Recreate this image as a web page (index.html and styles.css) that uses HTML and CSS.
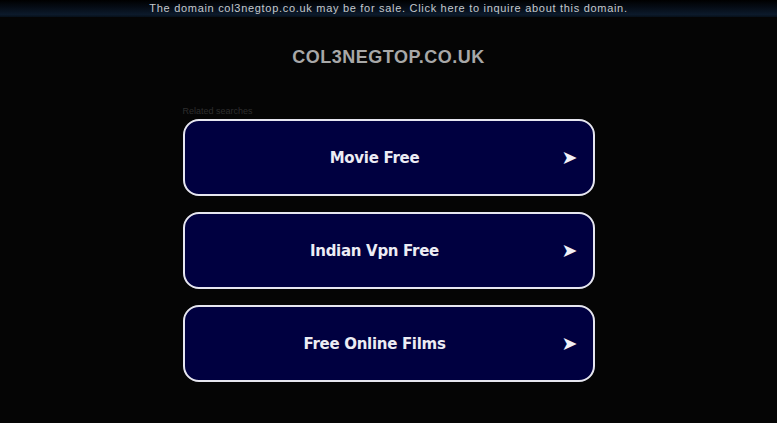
FILE: index.html
```html
<!DOCTYPE html>
<html>
<head>
<meta charset="utf-8">
<link rel="stylesheet" href="styles.css">
</head>
<body>
<div class="topbar">The domain col3negtop.co.uk may be for sale. Click here to inquire about this domain.</div>
<h1 class="title">COL3NEGTOP.CO.UK</h1>
<div class="related">
  <div class="label">Related searches</div>
  <div class="list">
    <a class="item"><span class="text">Movie Free</span><span class="arrow">➤</span></a>
    <a class="item"><span class="text">Indian Vpn Free</span><span class="arrow">➤</span></a>
    <a class="item"><span class="text">Free Online Films</span><span class="arrow">➤</span></a>
  </div>
</div>
</body>
</html>
```
FILE: styles.css
```css
html, body {
  margin: 0;
  padding: 0;
  background: #050505;
  height: 100%;
  overflow: hidden;
}
.topbar {
  height: 17px;
  line-height: 16px;
  text-align: center;
  font-family: "Liberation Sans", Arial, sans-serif;
  font-size: 11px;
  letter-spacing: 0.7px;
  color: #c4c8cc;
  background: linear-gradient(to bottom, #000000 0%, #050b14 40%, #0c1a2b 85%, #07101a 100%);
}
.title {
  margin: 28px 0 0 0;
  text-align: center;
  font-family: "Liberation Sans", Arial, sans-serif;
  font-weight: bold;
  font-size: 18px;
  letter-spacing: 0.5px;
  line-height: 24px;
  color: #a8a8a8;
}
.related {
  width: 412px;
  margin: 37px auto 0 auto;
}
.label {
  font-family: "Liberation Sans", Arial, sans-serif;
  font-size: 9px;
  line-height: 11px;
  color: #2e2e2e;
  margin-bottom: 2px;
}
.list {
  display: flex;
  flex-direction: column;
  gap: 16px;
}
.item {
  display: flex;
  align-items: center;
  height: 73px;
  border: 2px solid #e6e6f0;
  border-radius: 16px;
  background: #000040;
  position: relative;
  cursor: pointer;
}
.text {
  flex: 1;
  text-align: center;
  font-family: "DejaVu Sans", Verdana, sans-serif;
  font-weight: bold;
  font-size: 15px;
  letter-spacing: -0.3px;
  color: #ececf4;
  margin-right: 28px;
}
.arrow {
  position: absolute;
  right: 15px;
  top: 50%;
  transform: translateY(-54%);
  color: #f0f0f8;
  font-family: "DejaVu Sans", sans-serif;
  font-size: 19px;
}
```
